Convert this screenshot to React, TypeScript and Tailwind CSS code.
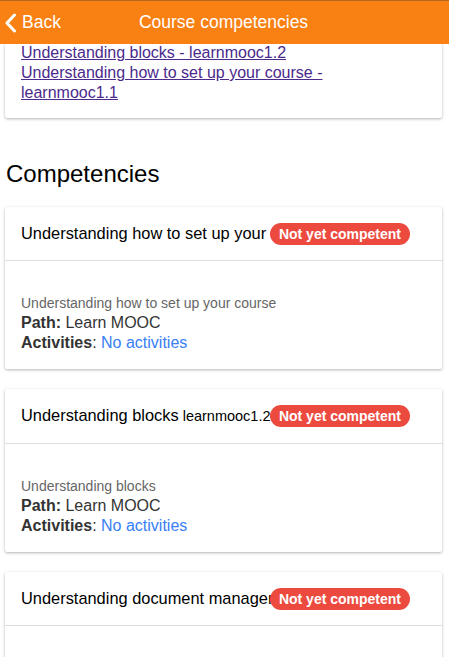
import { Fragment } from 'react';

const comps = [
  { title: 'Understanding how to set up your course', code: '', desc: 'Understanding how to set up your course' },
  { title: 'Understanding blocks', code: 'learnmooc1.2', desc: 'Understanding blocks' },
  { title: 'Understanding document management', code: '', desc: 'Understanding document management' },
];

function CompetencyCard({ title, code, desc }: { title: string; code: string; desc: string }) {
  return (
    <div className="ml-[5px] mr-[7px] mb-5 rounded-[2px] bg-white shadow-[0_1px_3px_rgba(0,0,0,0.3)]">
      <div className="relative border-b border-[#dddddd] px-4 pt-4 pb-[17px]">
        <div className="overflow-hidden whitespace-nowrap text-[16.4px] leading-5 text-black">
          {title}
          {code && <span className="text-[14.5px]"> {code}</span>}
        </div>
        <span className="absolute right-[32px] top-1/2 -translate-y-1/2 rounded-full bg-[#ec4a3f] px-[9px] text-[14px] font-bold leading-[22px] text-white">
          Not yet competent
        </span>
      </div>
      <div className="px-4 pt-8 pb-4 text-[16px] leading-5 text-[#333333]">
        <div className="text-[14px] text-[#666666]">{desc}</div>
        <div>
          <b className="text-[#333333]">Path:</b> Learn MOOC
        </div>
        <div>
          <b className="text-[#333333]">Activities</b>: <span className="text-[#387ef5]">No activities</span>
        </div>
      </div>
    </div>
  );
}

export default function App() {
  return (
    <div className="h-[657px] w-[449px] overflow-hidden bg-white font-['Liberation_Sans',Arial,sans-serif]">
      {/* Header */}
      <div className="relative z-10 flex h-[44px] items-center border-t border-[#b8681c] bg-[#f98012] text-white">
        <div className="flex w-[90px] items-center pl-1">
          <svg width="13" height="20" viewBox="0 0 13 20" fill="none">
            <path d="M10.5 2 L3 10 L10.5 18" stroke="white" strokeWidth="3" strokeLinecap="round" strokeLinejoin="round" />
          </svg>
          <span className="ml-[5px] text-[17.5px]">Back</span>
        </div>
        <div className="flex-1 pr-[92px] text-center text-[17.5px] font-medium">Course competencies</div>
      </div>

      <div className="-mt-px">
        {/* Related courses card (scrolled) */}
        <div className="ml-[5px] mr-[7px] rounded-[2px] bg-white px-4 pb-[15px] shadow-[0_1px_3px_rgba(0,0,0,0.3)]">
          <div className="text-[16px] leading-5 text-[#4b2a8c]">
            <a className="underline">Understanding blocks - learnmooc1.2</a>
            <br />
            <a className="underline">
              Understanding how to set up your course -<br />
              learnmooc1.1
            </a>
          </div>
        </div>

        <h2 className="mt-[42px] mb-[19px] pl-[6px] text-[24px] font-medium leading-7 text-black">Competencies</h2>

        {comps.map((c, i) => (
          <Fragment key={i}>
            <CompetencyCard {...c} />
          </Fragment>
        ))}
      </div>
    </div>
  );
}
